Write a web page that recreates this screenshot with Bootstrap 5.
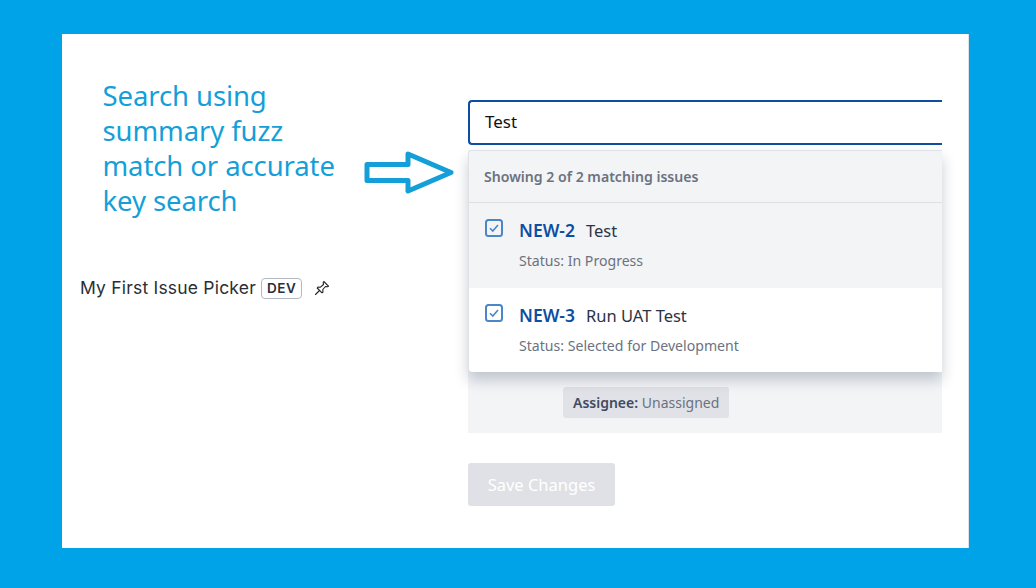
<!DOCTYPE html>
<html lang="en">
<head>
<meta charset="utf-8">
<title>Issue Picker</title>
<link href="https://cdn.jsdelivr.net/npm/bootstrap@5.3.0/dist/css/bootstrap.min.css" rel="stylesheet">
<style>
html,body{height:100%;overflow:hidden}
body{background:#00a2e8;font-family:"Noto Sans",sans-serif;margin:0;padding:34px 67px 40px 62px}
.sheet{background:#fff;height:514px;border-right:1px solid #dfe3e8;overflow:hidden}
.left-col{width:406px;flex:none}
.callout{padding:44px 0 0 40.500px;height:242px;display:flex}
.callout-text{color:#149fd8;font-size:27.5px;line-height:35px;width:250px;flex:none;letter-spacing:-.1px}
.arrow-svg{flex:none;margin:73px 0 0 11px;display:block}
.app-name{padding-left:18px;font-family:Inter,sans-serif;font-size:17.500px;letter-spacing:.2px;color:#2a2e36;height:24px}
.dev-tag{font-size:13.5px;font-weight:600;border:1px solid #b3b9c4;border-radius:4px;padding:0 5px;line-height:19px;letter-spacing:.5px;color:#292f3a;margin-left:1px}
.right-col{width:474px;flex:none;padding-top:66px;position:relative}
.search-box{height:45px;border:2px solid #0c4ea2;border-right:0;border-radius:4px 0 0 4px;padding:0 15px 2px;display:flex;align-items:center;font-size:17px;color:#111}
.fields-panel{background:#f3f4f6;height:283px;margin-top:5px;padding:237px 0 0 95px}
.assignee-chip{background:#e0e2e7;border-radius:3px;display:inline-block;font-size:14px;line-height:31px;padding:0 10px;color:#6b7280;height:31px}
.assignee-chip strong{color:#414a60;font-weight:600}
.results-menu{position:absolute;left:0;right:0;top:116px;background:#fff;border-left:1px solid #dfe1e6;border-top:1px solid #dfe1e6;border-radius:4px 0 0 4px;box-shadow:0 8px 14px rgba(9,30,66,.22);overflow:hidden}
.results-head{background:#f3f4f6;height:52px;border-bottom:1px solid #dcdfe4;padding-left:15px;font-size:14.100px;font-weight:600;color:#6b7280;line-height:51px}
.result-row{height:85px;padding:15px 0 0 15px;gap:15px}
.result-row.is-active{background:#f3f4f6}
.result-row+.result-row{height:84px}
.issue-key{color:#0c4ea2;font-weight:600;font-size:17.500px;margin-right:11px}
.issue-name{color:#2c3345;font-size:16.500px}
.issue-line{line-height:24px;height:24px}
.issue-status{color:#6b7280;font-size:14.100px;line-height:20px;margin-top:9px}
.check-svg{display:block;margin-top:0;flex:none}
.save-btn{margin-top:30px;width:147px;height:43px;background:#dfe1e6;border:0;color:#fff;font-size:16.500px;border-radius:3px;padding:2px 0 0;display:block;opacity:1}
.save-btn:disabled{background:#dfe1e6;color:#fff;opacity:1}
</style>
</head>
<body>
<div class="sheet d-flex">
  <div class="left-col">
    <div class="callout">
      <div class="callout-text">Search using summary fuzz match or accurate key search</div>
      <svg class="arrow-svg" width="92" height="44" viewBox="0 0 92 44"><path d="M3 13.500H44V3L87 21.500L44 40V29.500H3Z" fill="none" stroke="#149fd8" stroke-width="5" stroke-linejoin="round"/></svg>
    </div>
    <div class="app-name d-flex align-items-center gap-1">
      <span>My First Issue Picker</span>
      <span class="dev-tag">DEV</span>
      <svg class="ms-2" width="16" height="16" viewBox="0 0 16 16" fill="none" stroke="#222" stroke-width="1.100" stroke-linejoin="round"><path d="M9.800 1.500L14.500 6.200L13.500 6.800L11.500 6.500L8.800 9.500L9 12L8 12.800L3.200 8L4 7L6.500 7.200L9.500 4.500L9.200 2.500Z"/><path d="M5.500 10.500L1.500 14.500" stroke-linecap="round"/></svg>
    </div>
  </div>
  <div class="right-col">
    <div class="search-box">Test</div>
    <div class="fields-panel"><span class="assignee-chip"><strong>Assignee:</strong> Unassigned</span></div>
    <button class="save-btn btn" disabled>Save Changes</button>
    <div class="results-menu">
      <div class="results-head">Showing 2 of 2 matching issues</div>
      <div class="result-row is-active d-flex">
        <svg class="check-svg" width="20" height="20" viewBox="0 0 20 20" fill="none"><rect x="2" y="2" width="16" height="16" rx="2.500" stroke="#4a86c8" stroke-width="2"/><path d="M6 10.200L8.800 13L14 7" stroke="#4a86c8" stroke-width="1.600"/></svg>
        <div>
          <div class="issue-line"><span class="issue-key">NEW-2</span><span class="issue-name">Test</span></div>
          <div class="issue-status">Status: In Progress</div>
        </div>
      </div>
      <div class="result-row d-flex">
        <svg class="check-svg" width="20" height="20" viewBox="0 0 20 20" fill="none"><rect x="2" y="2" width="16" height="16" rx="2.500" stroke="#4a86c8" stroke-width="2"/><path d="M6 10.200L8.800 13L14 7" stroke="#4a86c8" stroke-width="1.600"/></svg>
        <div>
          <div class="issue-line"><span class="issue-key">NEW-3</span><span class="issue-name">Run UAT Test</span></div>
          <div class="issue-status">Status: Selected for Development</div>
        </div>
      </div>
    </div>
  </div>
</div>
<script src="https://cdn.jsdelivr.net/npm/bootstrap@5.3.0/dist/js/bootstrap.bundle.min.js"></script>
</body>
</html>
